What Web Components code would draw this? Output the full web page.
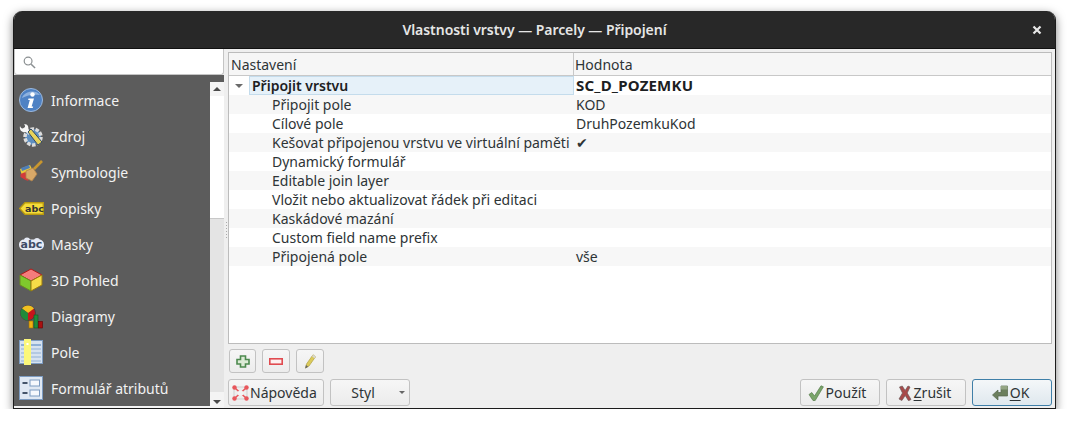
<!DOCTYPE html>
<html lang="cs">
<head>
<meta charset="utf-8">
<title>Vlastnosti vrstvy</title>
<style>
  html, body { margin: 0; background: #fff; }
  body { padding: 11px 13px 0; font: 14px "Noto Sans", sans-serif; color: #2e3436; }
</style>
</head>
<body>
<template id="icons">
  <svg data-name="info" viewBox="0 0 24 24"><circle cx="12" cy="12" r="11.5" fill="#4f82c4" stroke="#9db9dc"/><path d="M3 10C5 3 17 1 21 7 15 6 8 7 3 10Z" fill="#8fb2de"/><circle cx="13.5" cy="6.5" r="2.2" fill="#fff"/><path d="M9.5 10.5h5.500l-2.400 8h1.600l-.5 1.500H8.600l2.200-8H9.100Z" fill="#fff"/></svg>
  <svg data-name="source" viewBox="0 0 24 24"><circle cx="14" cy="13" r="8" fill="#5f8fc0" stroke="#dcdcdc" stroke-width="3.500" stroke-dasharray="3.500 1.500"/><path d="M1 2c1 3 3 3 5 1 0-1 0-2-1-3 4 0 5 3 4 6l3 3-2 2-3-3C4 9 0 7 1 2Z" fill="#f6f6f6"/><path d="M9 8l10 13 4-3L12 5Z" fill="#e8d35a" stroke="#34495e"/></svg>
  <svg data-name="symbology" viewBox="0 0 24 24"><path d="M1 9l10-4 3 6-11 5Z" fill="#e8c93c"/><path d="M2 8l8-3 1 3-8 3Z" fill="#4f7fb8"/><path d="M1.500 14l5-2 3 9-3-1-5-3Z" fill="#d33b3b"/><path d="M7 11l7-3 4 6-5 7-6-3Z" fill="#d8a868" stroke="#b0834a" stroke-width=".8"/><path d="M15 9L23 1" stroke="#c8962e" stroke-width="2.600" fill="none"/></svg>
  <svg data-name="labels" viewBox="0 0 25 13"><path d="M.7 6.500L6 .7h18.300v11.600H6Z" fill="#f5dc3a" stroke="#b99a10" stroke-width="1.400"/><text x="6" y="10" font-family="DejaVu Sans" font-weight="700" font-size="9.500" fill="#333">abc</text></svg>
  <svg data-name="masks" viewBox="0 0 27 14"><rect x="1" y="2.500" width="25" height="10.500" rx="5" fill="#e6ebf7"/><circle cx="9" cy="3.500" r="3" fill="#e6ebf7"/><circle cx="19" cy="4" r="3" fill="#e6ebf7"/><text x="2.500" y="11" font-family="DejaVu Sans" font-weight="700" font-size="11" fill="#3d4a66">abc</text></svg>
  <svg data-name="cube" viewBox="0 0 24 24"><path d="M12 1l11 6-11 6L1 7Z" fill="#f47c7c" stroke="#b01818"/><path d="M1 7l11 6v10L1 17Z" fill="#7fc92c" stroke="#6a8a20"/><path d="M23 7l-11 6v10l11-6Z" fill="#f6dc48" stroke="#9a7a10"/></svg>
  <svg data-name="diagram" viewBox="0 0 24 24"><circle cx="9" cy="9" r="7.500" fill="#c8141c" stroke="#444"/><path d="M9 9L3 4.500A7.500 7.500 0 0 1 15 4.500Z" fill="#f0c020"/><path d="M9 9V16.500A7.500 7.500 0 0 1 3 4.500Z" fill="#1f8a3a"/><rect x="10" y="17" width="4" height="7" fill="#f0b010" stroke="#a07000" stroke-width=".6"/><rect x="15" y="11" width="4" height="13" fill="#1f8a3a" stroke="#0f5a20" stroke-width=".6"/><rect x="19.500" y="17.500" width="4" height="6.500" fill="#a81010" stroke="#600" stroke-width=".6"/></svg>
  <svg data-name="fields" viewBox="0 0 24 26"><rect x=".5" y="1.500" width="23" height="23" fill="#d6e2f0" stroke="#7d9cc2"/><path d="M2 5h20v2H2Z" fill="#8fb0d6"/><path d="M10 10h12M10 14h12M10 18h12M10 22h12M2 10h4M2 14h4M2 18h4M2 22h4" stroke="#8fb0d6" stroke-width="1.200"/><rect x="5" y="0" width="7" height="26" fill="#fbf77a"/><rect x="7.500" y="4" width="2" height="2" fill="#fff"/></svg>
  <svg data-name="form" viewBox="0 0 24 24"><rect x=".5" y=".5" width="23" height="23" fill="#dfe8f3" stroke="#7d9cc2"/><rect x="11" y="4" width="9.500" height="6" fill="#f6f9fd" stroke="#7d9cc2"/><rect x="11" y="14" width="9.500" height="6" fill="#f6f9fd" stroke="#7d9cc2"/><rect x="3.500" y="6" width="5" height="2" fill="#44546a"/><rect x="3.500" y="16" width="5" height="2" fill="#44546a"/></svg>
  <svg data-name="add" viewBox="0 0 14 13" preserveAspectRatio="none"><path d="M4.500 1h5v3.500H13v4.500H9.500v3h-5v-3H1V4.500h3.500Z" fill="#dcebd6" stroke="#4d8a4f" stroke-width="1.600"/></svg>
  <svg data-name="remove" viewBox="0 0 14 7"><rect x=".8" y=".8" width="12.400" height="5.400" fill="#fdf0f0" stroke="#e04b50" stroke-width="1.600"/></svg>
  <svg data-name="edit" viewBox="0 0 12 15"><path d="M2.500 10L9 .8l2.500 2L5 12l-3.500 2Z" fill="#dccb5a" stroke="#b0a040" stroke-width=".7"/><path d="M9 .8l2.500 2-1 1.500L8 2.300Z" fill="#d8d8d8"/><path d="M2 11l-.8 3.500 3-1.700Z" fill="#666"/></svg>
  <svg data-name="help" viewBox="0 0 17 16"><rect x="2" y="2" width="13" height="12" fill="#eeeeee" stroke="#cfcfcf"/><path d="M3 3l11 10M14 3L3 13" stroke="#e8565b" stroke-width="1.500"/><circle cx="2.500" cy="2.500" r="2.200" fill="#e8565b"/><circle cx="14.500" cy="2.500" r="2.200" fill="#e8565b"/><circle cx="2.500" cy="13.500" r="2.200" fill="#e8565b"/><circle cx="14.500" cy="13.500" r="2.200" fill="#e8565b"/><ellipse cx="8.500" cy="8" rx="3" ry="2.600" fill="#f4f4f4"/></svg>
  <svg data-name="apply" viewBox="0 0 16 16"><path d="M1 9.500l2.800-2 2.700 3.500L13 .8l2.400 1L7.200 15.500H5Z" fill="#7aa56a" stroke="#567d4a" stroke-width=".7"/></svg>
  <svg data-name="cancel" viewBox="0 0 14 16"><path d="M1.500 2l2.800-1 2.800 4.500L10 1l2 1-2.800 6 3.800 6.500-2.500 1.200-3.300-5.200-3.300 5L1 14l3.500-6Z" fill="#a84a4a" stroke="#6d5a5a" stroke-width=".7"/></svg>
  <svg data-name="ok" viewBox="0 0 16 16"><path d="M.5 10L6 5v2.500h3V1h6.500v10H6v4Z" fill="#6b7f5e" stroke="#55664a" stroke-width=".7"/><path d="M9 1h6.500v3.500H9Z" fill="#93a584"/></svg>
  <svg data-name="search" viewBox="0 0 14 14"><circle cx="5.500" cy="5.500" r="4.200" fill="none" stroke="#8a8f91" stroke-width="1.300"/><path d="M8.800 8.800L13 13" stroke="#8a8f91" stroke-width="1.600"/></svg>
</template>

<dialog-window heading="Vlastnosti vrstvy — Parcely — Připojení">
  <layer-sidebar slot="side">
    <side-item icon="info" size="24,24">Informace</side-item>
    <side-item icon="source" size="24,24">Zdroj</side-item>
    <side-item icon="symbology" size="24,24">Symbologie</side-item>
    <side-item icon="labels" size="25,13">Popisky</side-item>
    <side-item icon="masks" size="27,14" nudge="-1">Masky</side-item>
    <side-item icon="cube" size="24,24">3D Pohled</side-item>
    <side-item icon="diagram" size="24,26">Diagramy</side-item>
    <side-item icon="fields" size="24,26">Pole</side-item>
    <side-item icon="form" size="24,24">Formulář atributů</side-item>
  </layer-sidebar>

  <join-tree slot="main">
    <tree-row kind="group" value="SC_D_POZEMKU">Připojit vrstvu</tree-row>
    <tree-row alt value="KOD">Připojit pole</tree-row>
    <tree-row value="DruhPozemkuKod">Cílové pole</tree-row>
    <tree-row alt value="✔">Kešovat připojenou vrstvu ve virtuální paměti</tree-row>
    <tree-row>Dynamický formulář</tree-row>
    <tree-row alt>Editable join layer</tree-row>
    <tree-row>Vložit nebo aktualizovat řádek při editaci</tree-row>
    <tree-row alt>Kaskádové mazání</tree-row>
    <tree-row>Custom field name prefix</tree-row>
    <tree-row alt value="vše">Připojená pole</tree-row>
  </join-tree>

  <tool-row slot="main">
    <push-button icon="add" icon-size="14,13" w="27" h="24"></push-button>
    <push-button icon="remove" icon-size="14,7" w="28" h="24"></push-button>
    <push-button icon="edit" icon-size="12,15" w="28" h="24"></push-button>
  </tool-row>

  <button-bar slot="main">
    <push-button icon="help" icon-size="17,16" w="96" h="27" start>Nápověda</push-button>
    <push-button w="80" h="27" menu>Styl</push-button>
    <push-button slot="right" icon="apply" icon-size="16,16" w="80" h="27" nudge="6">Použít</push-button>
    <push-button slot="right" icon="cancel" icon-size="14,16" w="80" h="27" nudge="3"><u>Z</u>rušit</push-button>
    <push-button slot="right" icon="ok" icon-size="16,16" w="80" h="27" nudge="3" primary><u>O</u>K</push-button>
  </button-bar>
</dialog-window>

<script>
function iconMarkup(name, w, h) {
  const source = document.getElementById('icons').content.querySelector(`svg[data-name="${name}"]`);
  const svg = source.cloneNode(true);
  svg.setAttribute('width', w);
  svg.setAttribute('height', h);
  svg.style.display = 'block';
  svg.style.flex = 'none';
  return svg;
}

class DialogWindow extends HTMLElement {
  connectedCallback() {
    const root = this.attachShadow({ mode: 'open' });
    root.innerHTML = `
      <style>
        :host {
          display: block; width: 1043px; height: 398px; box-sizing: border-box;
          background: #efefef; border: 1px solid #1c1c1c; border-top: 0;
          border-radius: 9px 9px 0 0; overflow: hidden;
          box-shadow: 0 3px 10px rgba(0,0,0,.5);
        }
        header {
          height: 37px; background: #282828; color: #e6e6e6; font-weight: 600; font-size: 14px;
          letter-spacing: -.05px;
          display: flex; align-items: center; justify-content: center; position: relative;
          border-bottom: 1px solid #111;
        }
        .close { position: absolute; right: 13px; top: 14px; width: 10px; height: 10px; }
        .body { display: flex; height: 359px; }
        .main { flex: 1; display: flex; flex-direction: column; padding: 3px 3px 0 4px; min-width: 0; }
      </style>
      <header>
        <span>${this.getAttribute('heading')}</span>
        <svg class="close" viewBox="0 0 10 10"><path d="M1.500 1.500l7 7M8.500 1.500l-7 7" stroke="#e8e8e8" stroke-width="2.200"/></svg>
      </header>
      <div class="body">
        <slot name="side"></slot>
        <div class="main"><slot name="main"></slot></div>
      </div>`;
  }
}

class LayerSidebar extends HTMLElement {
  connectedCallback() {
    const root = this.attachShadow({ mode: 'open' });
    root.innerHTML = `
      <style>
        :host { display: flex; flex-direction: column; width: 210px; flex: none; position: relative; height: 359px; }
        .search {
          height: 26px; box-sizing: border-box; background: #fff; border: 1px solid #c4c4c4; border-top: 0;
          border-radius: 0 0 3px 3px; padding: 7px 0 0 8px; flex: none;
        }
        .wrap { flex: 1; display: flex; background: #5c5c5c; min-height: 0; border-bottom: 2px solid #f4f4f4; }
        .list { flex: 1; padding-top: 7px; display: flex; flex-direction: column; }
        .bar { width: 14px; margin-top: 7px; display: flex; flex-direction: column; background: #e4e4e4; }
        .arrow { height: 14px; background: #f4f4f4; display: flex; align-items: center; justify-content: center; flex: none; }
        .arrow i { border: 4px solid transparent; border-top: 0; border-bottom: 4px solid #4a4a4a; }
        .arrow.down { align-items: flex-end; padding-bottom: 2px; height: 12px; }
        .arrow.down i { border-bottom: 0; border-top: 4px solid #4a4a4a; }
        .thumb { height: 122px; background: #fff; border-bottom: 1px solid #c8c8c8; flex: none; }
        .trough { flex: 1; }
        .grip {
          position: absolute; left: 212px; top: 173px; width: 1px; height: 16px;
          background: repeating-linear-gradient(#aaa 0 1px, transparent 1px 3px);
        }
      </style>
      <div class="search"></div>
      <div class="wrap">
        <div class="list"><slot></slot></div>
        <div class="bar">
          <div class="arrow"><i></i></div>
          <div class="thumb"></div>
          <div class="trough"></div>
          <div class="arrow down"><i></i></div>
        </div>
      </div>
      <div class="grip"></div>`;
    root.querySelector('.search').append(iconMarkup('search', 13, 13));
  }
}

class SideItem extends HTMLElement {
  connectedCallback() {
    const root = this.attachShadow({ mode: 'open' });
    const [w, h] = this.getAttribute('size').split(',');
    const nudge = this.getAttribute('nudge') || 0;
    root.innerHTML = `
      <style>
        :host { display: flex; align-items: center; height: 36px; padding-left: 5px; color: #f2f2f2; font-size: 14px; }
        .ic { width: 32px; flex: none; display: flex; justify-content: flex-start; margin-left: ${nudge}px; margin-right: ${-nudge}px; }
      </style>
      <span class="ic"></span><slot></slot>`;
    root.querySelector('.ic').append(iconMarkup(this.getAttribute('icon'), w, h));
  }
}

class JoinTree extends HTMLElement {
  connectedCallback() {
    const root = this.attachShadow({ mode: 'open' });
    root.innerHTML = `
      <style>
        :host {
          display: block; height: 292px; box-sizing: border-box; background: #fff;
          border: 1px solid #bcbcbc; flex: none;
        }
        .head {
          display: grid; grid-template-columns: 344px 1fr; height: 23px; box-sizing: border-box;
          background: #f6f6f6; border-bottom: 1px solid #c8c8c8; line-height: 23px;
        }
        .head span { padding-left: 2px; }
        .head span + span { border-left: 1px solid #c8c8c8; padding-left: 1px; }
      </style>
      <div class="head"><span>Nastavení</span><span>Hodnota</span></div>
      <slot></slot>`;
  }
}

class TreeRow extends HTMLElement {
  connectedCallback() {
    const root = this.attachShadow({ mode: 'open' });
    const group = this.getAttribute('kind') === 'group';
    root.innerHTML = `
      <style>
        :host {
          display: grid; grid-template-columns: 345px 1fr; height: 19px; line-height: 19px;
          background: ${this.hasAttribute('alt') ? '#f7f7f7' : '#fff'};
          color: ${group ? '#1c2022' : '#2e3436'};
        }
        .name { padding-left: ${group ? 23 : 43}px; position: relative; white-space: nowrap; font-weight: ${group ? 600 : 400}; }
        .value { padding-left: 2px; white-space: nowrap; font-weight: ${group ? 700 : 400}; ${group ? 'font-size: 15px; letter-spacing: .2px;' : ''} }
        .cell {
          position: absolute; left: 20px; right: 0; top: 0; bottom: 0; box-sizing: border-box;
          background: #e6f1f9; border: 1px solid #c4dcec;
        }
        .tri {
          position: absolute; left: 6px; top: 8px; border: 4px solid transparent; border-bottom: 0;
          border-top: 4px solid #6a6a6a;
        }
        .label { position: relative; }
      </style>
      <div class="name">
        ${group ? '<span class="tri"></span><span class="cell"></span>' : ''}
        <span class="label"><slot></slot></span>
      </div>
      <div class="value">${this.getAttribute('value') || ''}</div>`;
  }
}

class ToolRow extends HTMLElement {
  connectedCallback() {
    this.attachShadow({ mode: 'open' }).innerHTML = `
      <style>
        :host { display: flex; gap: 6px; height: 24px; margin: 5px 0 0 0; padding-left: 1px; flex: none; }
      </style>
      <slot></slot>`;
  }
}

class ButtonBar extends HTMLElement {
  connectedCallback() {
    this.attachShadow({ mode: 'open' }).innerHTML = `
      <style>
        :host { display: flex; justify-content: space-between; height: 27px; margin-top: 6px; flex: none; }
        div { display: flex; gap: 6px; }
      </style>
      <div><slot></slot></div>
      <div><slot name="right"></slot></div>`;
  }
}

class PushButton extends HTMLElement {
  connectedCallback() {
    const root = this.attachShadow({ mode: 'open' });
    const primary = this.hasAttribute('primary');
    const start = this.hasAttribute('start');
    const menu = this.hasAttribute('menu');
    const nudge = this.getAttribute('nudge') || 0;
    root.innerHTML = `
      <style>
        :host {
          display: flex; align-items: center; justify-content: ${start ? 'flex-start' : 'center'};
          box-sizing: border-box; position: relative; gap: ${start ? 1 : 2}px;
          padding: 0 ${menu ? 14 : nudge}px 0 ${start ? 3 : 0}px;
          width: ${this.getAttribute('w')}px; height: ${this.getAttribute('h')}px;
          border: 1px solid ${primary ? '#3f7fa8' : '#c2c2c2'}; border-radius: 3px;
          background: ${primary ? 'linear-gradient(#f4f7f9, #dfe8ee)' : 'linear-gradient(#f6f6f6, #ececec)'};
          color: #2e3436; font-size: 14px; white-space: nowrap; text-underline-offset: 2px;
        }
        .menu {
          position: absolute; right: 4px; top: 11px; border: 3px solid transparent; border-bottom: 0;
          border-top: 3px solid #666;
        }
      </style>
      <span class="ic"></span>
      <span class="label"><slot></slot></span>
      ${menu ? '<span class="menu"></span>' : ''}`;
    const holder = root.querySelector('.ic');
    const name = this.getAttribute('icon');
    if (name) {
      const [w, h] = this.getAttribute('icon-size').split(',');
      holder.append(iconMarkup(name, w, h));
    } else {
      holder.remove();
    }
    if (!this.textContent.trim()) root.querySelector('.label').remove();
  }
}

customElements.define('dialog-window', DialogWindow);
customElements.define('layer-sidebar', LayerSidebar);
customElements.define('side-item', SideItem);
customElements.define('join-tree', JoinTree);
customElements.define('tree-row', TreeRow);
customElements.define('tool-row', ToolRow);
customElements.define('button-bar', ButtonBar);
customElements.define('push-button', PushButton);
</script>
</body>
</html>
